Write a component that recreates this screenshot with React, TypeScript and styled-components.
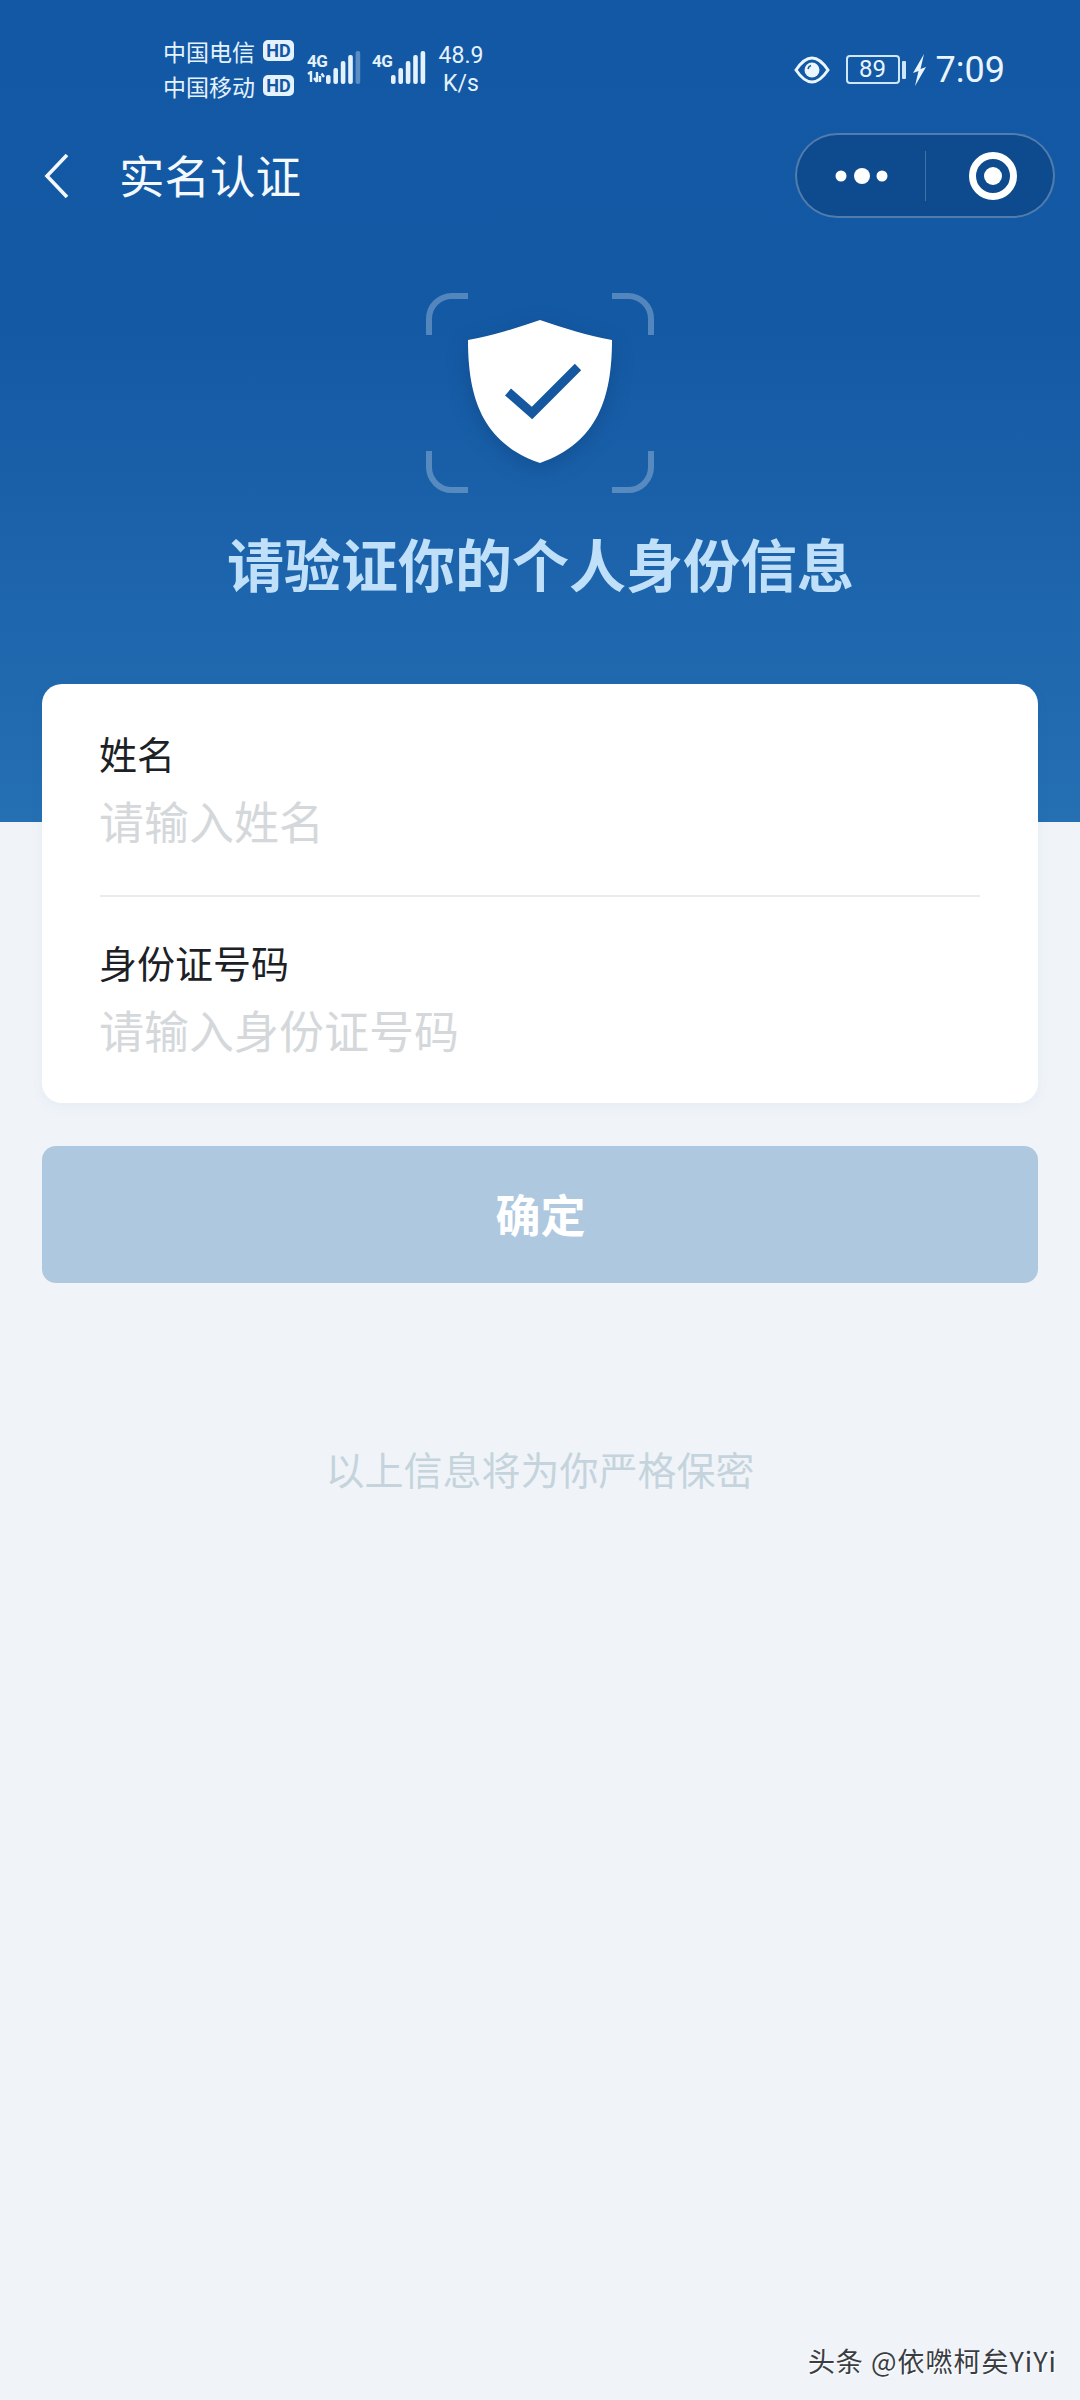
import React from "react";
import styled, { createGlobalStyle } from "styled-components";

const GlobalStyle = createGlobalStyle`
  html, body {
    margin: 0;
    padding: 0;
    background: #f0f4f9;
    font-family: "Noto Sans CJK SC", "Noto Sans", sans-serif;
  }
  * {
    box-sizing: border-box;
  }
`;

function SignalBars({ dimLast }: { dimLast: boolean }) {
  const heights = [9, 16, 23, 29, 33];
  return (
    <BarsSvg viewBox="0 0 36 34" width={36} height={34}>
      {heights.map((h, i) => (
        <rect
          key={i}
          x={1 + i * 7.4}
          y={33 - h}
          width={4.6}
          height={h}
          rx={2}
          fill="#e4f2fd"
          opacity={dimLast && i === 4 ? 0.35 : 1}
        />
      ))}
    </BarsSvg>
  );
}

function Shield() {
  return (
    <EmblemSvg viewBox="0 0 228 200" width={228} height={200}>
      <g fill="none" stroke="#fff" strokeOpacity={0.27} strokeWidth={6}>
        <path d="M3 42V26A23 23 0 0 1 26 3H42" />
        <path d="M186 3H202A23 23 0 0 1 225 26V42" />
        <path d="M3 158V174A23 23 0 0 0 26 197H42" />
        <path d="M186 197H202A23 23 0 0 0 225 174V158" />
      </g>
      <path
        className="shield"
        d="M114 27C90 35 66 43 42 47C42 104 56 150 114 170C172 150 186 104 186 47C162 43 138 35 114 27Z"
        fill="#fff"
      />
      <path d="M82 99L106 120L152 74" fill="none" stroke="#15589f" strokeWidth={9} />
    </EmblemSvg>
  );
}

export default function App() {
  return (
    <Page>
      <GlobalStyle />
      <Hero>
        <StatusBar>
          <Carriers>
            <CarrierRow>
              中国电信<HdBadge>HD</HdBadge>
            </CarrierRow>
            <CarrierRow>
              中国移动<HdBadge>HD</HdBadge>
            </CarrierRow>
          </Carriers>
          <Signal>
            <SignalLabel>
              <span>4G</span>
              <svg viewBox="0 0 18 12" width={18} height={12}>
                <path
                  d="M1 3L4 1V11M10 1V11M10 11L7 7M13 11V5M17 6L14.5 2.5"
                  fill="none"
                  stroke="#e4f2fd"
                  strokeWidth={2.4}
                />
              </svg>
            </SignalLabel>
            <SignalBars dimLast />
          </Signal>
          <Signal>
            <SignalLabel>
              <span>4G</span>
            </SignalLabel>
            <SignalBars dimLast={false} />
          </Signal>
          <Speed>
            <span>48.9</span>
            <span>K/s</span>
          </Speed>
          <StatusRight>
            <svg viewBox="0 0 36 28" width={36} height={28}>
              <path
                d="M2 14C8 5 13 2 18 2C23 2 28 5 34 14C28 23 23 26 18 26C13 26 8 23 2 14Z"
                fill="none"
                stroke="#eaf5fe"
                strokeWidth={3}
              />
              <circle cx={18} cy={14} r={7.5} fill="#eaf5fe" />
              <path d="M14 13A4.5 4.5 0 0 1 17 9.6" fill="none" stroke="#15589f" strokeWidth={1.6} />
            </svg>
            <Battery>89</Battery>
            <BatteryTip />
            <svg viewBox="0 0 14 32" width={14} height={32}>
              <path d="M12 0L1 19L6.5 17L3 32L14 13L8.5 15Z" fill="#eaf5fe" />
            </svg>
            <Clock>7:09</Clock>
          </StatusRight>
        </StatusBar>
        <NavBar>
          <svg viewBox="0 0 26 46" width={26} height={46}>
            <path d="M23 2L3 23L23 44" fill="none" stroke="#f2f8fd" strokeWidth={3.6} />
          </svg>
          <NavTitle>实名认证</NavTitle>
          <Capsule>
            <MenuPart>
              <svg viewBox="0 0 54 20" width={54} height={20}>
                <circle cx={6} cy={10} r={5.5} fill="#fff" />
                <circle cx={27} cy={10} r={8} fill="#fff" />
                <circle cx={47} cy={10} r={5.5} fill="#fff" />
              </svg>
            </MenuPart>
            <CapsuleLine />
            <ClosePart>
              <svg viewBox="0 0 48 48" width={48} height={48}>
                <circle cx={24} cy={24} r={20.5} fill="none" stroke="#fff" strokeWidth={7} />
                <circle cx={24} cy={24} r={9} fill="#fff" />
              </svg>
            </ClosePart>
          </Capsule>
        </NavBar>
        <Shield />
        <HeroTitle>请验证你的个人身份信息</HeroTitle>
      </Hero>
      <FormCard>
        <Field $divided>
          <FieldLabel>姓名</FieldLabel>
          <FieldHint>请输入姓名</FieldHint>
        </Field>
        <Field>
          <FieldLabel>身份证号码</FieldLabel>
          <FieldHint>请输入身份证号码</FieldHint>
        </Field>
      </FormCard>
      <SubmitButton type="button">确定</SubmitButton>
      <Notice>以上信息将为你严格保密</Notice>
      <Watermark>头条 @依嘫柯矣YiYi</Watermark>
    </Page>
  );
}

const Page = styled.div`
  width: 1080px;
  height: 2400px;
  display: flex;
  flex-direction: column;
  background: #f0f4f9;
  overflow: hidden;
`;

const Hero = styled.header`
  height: 822px;
  flex: none;
  display: flex;
  flex-direction: column;
  align-items: center;
  background: linear-gradient(180deg, #1358a4 0%, #1459a4 40%, #256fb3 100%);
`;

const StatusBar = styled.div`
  width: 100%;
  height: 133px;
  padding: 6px 75px 0 163px;
  display: flex;
  align-items: center;
  color: #e4f2fd;
`;

const Carriers = styled.div`
  display: flex;
  flex-direction: column;
  gap: 11px;
  margin: -3px 2px 0 0;
`;

const CarrierRow = styled.div`
  display: flex;
  align-items: center;
  gap: 8px;
  height: 24px;
  font-size: 23px;
  line-height: 24px;
  white-space: nowrap;
`;

const HdBadge = styled.span`
  width: 31px;
  height: 21px;
  border-radius: 5px;
  background: #e4f2fd;
  color: #14569f;
  font-family: "Roboto", sans-serif;
  font-size: 18px;
  font-weight: 700;
  line-height: 21px;
  text-align: center;
`;

const Signal = styled.div`
  display: flex;
  align-items: flex-end;
  margin: 0 0 4px 11px;
  height: 34px;
`;

const SignalLabel = styled.div`
  width: 18px;
  height: 34px;
  display: flex;
  flex-direction: column;
  font-family: "Roboto", sans-serif;
  font-weight: 700;
  font-size: 17px;
  line-height: 20px;
  letter-spacing: -0.5px;
  white-space: nowrap;
`;

const BarsSvg = styled.svg`
  display: block;
  flex: none;
`;

const Speed = styled.div`
  margin-left: 13px;
  width: 44px;
  display: flex;
  flex-direction: column;
  align-items: center;
  font-family: "Roboto", sans-serif;
  font-size: 23px;
  line-height: 28px;
  white-space: nowrap;
`;

const StatusRight = styled.div`
  margin-left: auto;
  display: flex;
  align-items: center;
  color: #eaf5fe;
`;

const Battery = styled.div`
  width: 54px;
  height: 29px;
  margin-left: 16px;
  border: 2px solid #cfe7fb;
  border-radius: 4px;
  font-family: "Roboto", sans-serif;
  font-size: 24px;
  line-height: 25px;
  text-align: center;
`;

const BatteryTip = styled.div`
  width: 4px;
  height: 18px;
  margin: 0 6px 0 2px;
  border-radius: 1px;
  background: #cfe7fb;
`;

const Clock = styled.div`
  margin-left: 10px;
  font-family: "Roboto", sans-serif;
  font-size: 36px;
  line-height: 40px;
`;

const NavBar = styled.nav`
  width: 100%;
  height: 85px;
  padding: 0 25px 0 44px;
  display: flex;
  align-items: center;
`;

const NavTitle = styled.h1`
  margin: 0 0 4px 49px;
  flex: 1;
  color: #f4f9fd;
  font-size: 45.5px;
  font-weight: 400;
  line-height: 60px;
`;

const Capsule = styled.div`
  width: 260px;
  height: 85px;
  display: flex;
  align-items: center;
  border: 2px solid rgba(255, 255, 255, 0.28);
  border-radius: 43px;
  background: #0e4a8e;
`;

const MenuPart = styled.div`
  width: 128px;
  padding-left: 1px;
  display: flex;
  align-items: center;
  justify-content: center;
`;

const ClosePart = styled.div`
  flex: 1;
  padding-left: 7px;
  display: flex;
  align-items: center;
  justify-content: center;
`;

const CapsuleLine = styled.div`
  width: 1px;
  height: 50px;
  background: rgba(255, 255, 255, 0.22);
`;

const EmblemSvg = styled.svg`
  display: block;
  flex: none;
  margin-top: 75px;

  .shield {
    filter: drop-shadow(0 6px 10px rgba(8, 50, 100, 0.3));
  }
`;

const HeroTitle = styled.h2`
  margin: 29px 0 0 1px;
  color: #bfe0f8;
  font-size: 57px;
  font-weight: 700;
  line-height: 80px;
  white-space: nowrap;
`;

const FormCard = styled.section`
  position: relative;
  width: 996px;
  height: 419px;
  margin: -138px 0 0 42px;
  flex: none;
  padding: 0 58px;
  border-radius: 20px;
  background: #fff;
  box-shadow: 0 4px 14px rgba(60, 90, 130, 0.05);
`;

const Field = styled.div<{ $divided?: boolean }>`
  display: flex;
  flex-direction: column;
  gap: 12px;
  padding: ${(p) => (p.$divided ? "43px 0 44px" : "39px 0 0")};
  border-bottom: ${(p) => (p.$divided ? "2px solid #e9ecef" : "none")};
`;

const FieldLabel = styled.label`
  margin-left: -1px;
  color: #1c2126;
  font-size: 38px;
  line-height: 52px;
`;

const FieldHint = styled.div`
  margin-left: -1px;
  color: #d5d8db;
  font-size: 45px;
  line-height: 60px;
`;

const SubmitButton = styled.button`
  width: 996px;
  height: 137px;
  margin: 43px 0 0 42px;
  flex: none;
  padding: 0 0 3px 1px;
  border: none;
  border-radius: 14px;
  background: #aec8df;
  color: #fff;
  font-family: inherit;
  font-size: 45px;
  font-weight: 700;
`;

const Notice = styled.p`
  margin: 155px 0 0;
  color: #c5d4dc;
  font-size: 39px;
  line-height: 60px;
  text-align: center;
`;

const Watermark = styled.div`
  margin: auto 23px 21px 0;
  align-self: flex-end;
  color: #3a3d42;
  font-size: 27px;
  letter-spacing: 1px;
  line-height: 36px;
  white-space: nowrap;
  text-shadow: 1px 1px 0 #fff;
`;
